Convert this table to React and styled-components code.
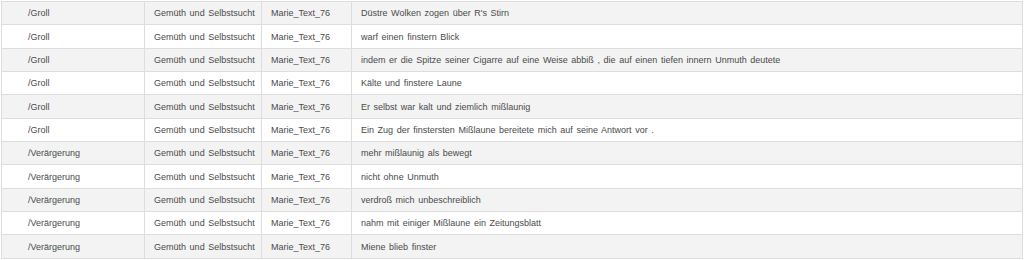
import styled, { createGlobalStyle } from 'styled-components'

const Global = createGlobalStyle`
    body {
        margin: 0;
        background: #ffffff;
        font-family: "Liberation Sans", Arial, Helvetica, sans-serif;
    }
`

const Wrap = styled.div`
    padding: 1px 1px 0 1px;
    width: 1024px;
    box-sizing: border-box;
`

const Table = styled.div`
    display: flex;
    flex-direction: column;
    border-top: 1px solid #dddddd;
    border-right: 1px solid #dddddd;
`

const Row = styled.div`
    display: grid;
    grid-template-columns: 143px 117px 90px 1fr;
    height: 23.35px;
    box-sizing: border-box;
    border-bottom: 1px solid #dddddd;
    background-color: ${props => props.striped ? '#f3f3f3' : '#ffffff'};
`

const Cell = styled.div`
    display: flex;
    align-items: center;
    border-left: 1px solid #dddddd;
    padding-left: ${props => props.first ? '26px' : '9px'};
    font-size: 9px;
    word-spacing: 1.1px;
    color: #4a4a4a;
    white-space: nowrap;
    overflow: hidden;
`

const rows = [
    ['/Groll', 'Düstre Wolken zogen über R\'s Stirn'],
    ['/Groll', 'warf einen finstern Blick'],
    ['/Groll', 'indem er die Spitze seiner Cigarre auf eine Weise abbiß , die auf einen tiefen innern Unmuth deutete'],
    ['/Groll', 'Kälte und finstere Laune'],
    ['/Groll', 'Er selbst war kalt und ziemlich mißlaunig'],
    ['/Groll', 'Ein Zug der finstersten Mißlaune bereitete mich auf seine Antwort vor .'],
    ['/Verärgerung', 'mehr mißlaunig als bewegt'],
    ['/Verärgerung', 'nicht ohne Unmuth'],
    ['/Verärgerung', 'verdroß mich unbeschreiblich'],
    ['/Verärgerung', 'nahm mit einiger Mißlaune ein Zeitungsblatt'],
    ['/Verärgerung', 'Miene blieb finster'],
]

export default function App() {
    return (
        <Wrap>
            <Global />
            <Table>
                {rows.map(([tag, text], i) => (
                    <Row key={i} striped={i % 2 === 0}>
                        <Cell first>{tag}</Cell>
                        <Cell>Gemüth und Selbstsucht</Cell>
                        <Cell>Marie_Text_76</Cell>
                        <Cell>{text}</Cell>
                    </Row>
                ))}
            </Table>
        </Wrap>
    )
}
